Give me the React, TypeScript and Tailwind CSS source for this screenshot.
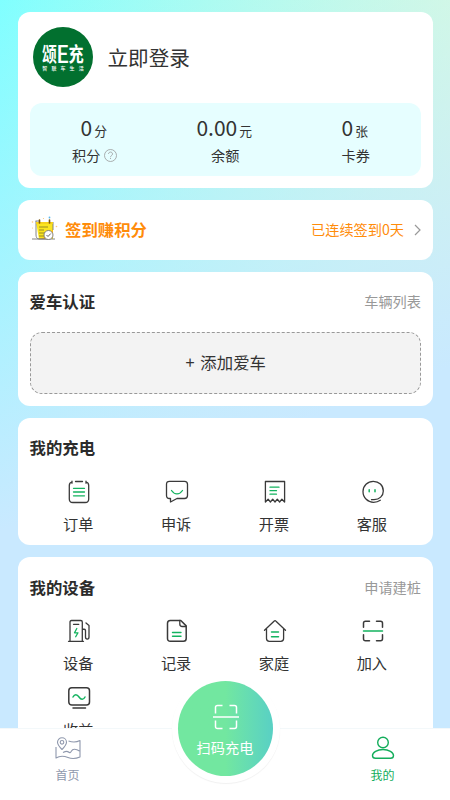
import React from 'react';

const Logo: React.FC = () => (
  <svg width="60" height="60" viewBox="0 0 60 60" className="shrink-0">
    <circle cx="30" cy="30" r="30" fill="#02702f" />
    <g fill="#fff" fontFamily="'Noto Sans CJK SC', sans-serif" fontWeight="700">
      <text transform="translate(9 34.5) scale(.72 1)" fontSize="20.500">颂</text>
      <text transform="translate(23.200 35.500) scale(.9 1)" fontSize="24" fontWeight="500">E</text>
      <text transform="translate(35.500 34.500) scale(.74 1)" fontSize="20.500">充</text>
      <text x="9.300" y="42.500" fontSize="5" letterSpacing="4.100" fontWeight="500">智联车生活</text>
    </g>
  </svg>
);

const CalendarIcon: React.FC = () => (
  <svg width="28" height="28" viewBox="0 0 28 28" fill="none">
    <path d="M5 6h17v17H8z" fill="#fbe51f" />
    <path d="M22 13v8l-5 2h-8l9-4z" fill="#fdb515" />
    <path d="M5 5v14c0 2 1 4 3 4h9M4.500 5h4M22 6v8M1 23h23" stroke="#777" strokeWidth=".9" />
    <path d="M5 6h17v2H5z" fill="#f6d21c" />
    <path d="M8.500 4v3M18.500 4v3" stroke="#7a5310" strokeWidth="1.600" strokeLinecap="round" />
    <path d="M8 11h9M8 14h5M8 17h7M8 20h5" stroke="#8d8224" strokeWidth=".9" />
    <circle cx="17.500" cy="19" r="4.500" fill="#fff" stroke="#777" strokeWidth=".9" />
    <path d="M15.500 19l1.500 1.500 2.800-3" stroke="#555" strokeWidth=".9" />
    <circle cx="18.500" cy="1.500" r=".9" fill="#5bb8ef" />
    <circle cx="1.500" cy="6" r=".8" fill="#fbc97c" />
    <circle cx="12.500" cy="2.500" r=".6" fill="#fbc97c" />
    <circle cx="25.500" cy="10.500" r=".8" fill="#fbc97c" />
    <circle cx="1.500" cy="12" r=".6" fill="#fbc97c" />
  </svg>
);

const DARK = '#3a3a3a';
const GREEN = '#13b35f';

const Icon: React.FC<{ children: React.ReactNode }> = ({ children }) => (
  <svg width="24" height="24" viewBox="0 0 24 24" fill="none" stroke={DARK} strokeWidth="1.3" strokeLinecap="round" strokeLinejoin="round">
    {children}
  </svg>
);

const OrderIcon = () => (
  <Icon>
    <path d="M5 2.200C3.200 2.500 2.300 3.700 2.300 5.500V19c0 2.200 1.300 3.500 3.500 3.500h12.400c2.200 0 3.500-1.300 3.500-3.500V5.500c0-1.800-.9-3-2.700-3.300M8.500 1.500h7M5 1.200v2M19 1.200v2" />
    <path d="M6.500 8.300h11M6.500 12h11M6.500 15.800h11" stroke={GREEN} />
  </Icon>
);

const AppealIcon = () => (
  <Icon>
    <path d="M4.500 1.300h15c2 0 3 1 3 3V15.500c0 2-1 3-3 3h-7.500L5.500 22v-3.500h-1c-2 0-3-1-3-3V4.300c0-2 1-3 3-3z" />
    <path d="M6.500 10.500c3 4.500 8 4.500 11 0" stroke={GREEN} />
  </Icon>
);

const InvoiceIcon = () => (
  <Icon>
    <path d="M2.400 22V1.500h19.200V22l-2.700-2.800-2.300 2.800-2.300-2.800L12 22l-2.300-2.800L7.400 22l-2.300-2.800z" />
    <path d="M7 7.200h9M7 10.700h6.500M7 14.200h6.500" stroke={GREEN} />
  </Icon>
);

const ServiceIcon = () => (
  <Icon>
    <path d="M10.500 19.700h2.500c5.500-.3 9.300-3.700 9.300-8.700C22.300 5.500 18 1.300 12.300 1.300S2 5.600 2 11.500c0 6.500 5 10.800 10.500 10.800 3 0 5-.7 6.800-2" />
    <path d="M8.200 9.700v2M14 9.700v2" stroke={GREEN} strokeWidth="1.500" />
  </Icon>
);

const DeviceIcon = () => (
  <Icon>
    <path d="M1.500 22.300h15M3 22V3c0-1 .5-1.500 1.500-1.500h9.300c1 0 1.500.5 1.500 1.500v19M6.500 5.300h5.300M19 4l3 2.500V18c0 2.700-3.500 2.700-3.500 0V11.500c0-1-.8-1.500-3-1.500" />
    <path d="M9.800 9.500l-2.300 4.300h3.500l-2.300 4" stroke={GREEN} />
  </Icon>
);

const RecordIcon = () => (
  <Icon>
    <path d="M5.300 1.500h10.500l5.400 5.400V19.500c0 1.800-1 2.800-2.800 2.800H5.300c-1.800 0-2.800-1-2.800-2.800V4.300c0-1.800 1-2.800 2.800-2.800z" strokeWidth="1.500" />
    <path d="M14.800 1.500v3.500c0 1.700.8 2.500 2.500 2.500h3.500" />
    <path d="M7.500 13.500h8.500M7.500 17.200h8.500" stroke={GREEN} strokeWidth="1.400" />
  </Icon>
);

const HomeIcon = () => (
  <Icon>
    <path d="M1.500 11.300L11 2.200c.7-.7 1.400-.7 2 0l9.500 9.100M3.500 10v9.500c0 1.800 1 2.800 2.800 2.800h11.500c1.800 0 2.800-1 2.800-2.800V10" />
    <path d="M8.500 13h7M8.500 17.800h7" stroke={GREEN} strokeWidth="1.500" />
  </Icon>
);

const JoinIcon = () => (
  <Icon>
    <path d="M8.500 2.300h-4c-1.300 0-2 .7-2 2v4M15.500 2.300h4c1.300 0 2 .7 2 2v4M8.500 21.700h-4c-1.300 0-2-.7-2-2v-4M15.500 21.700h4c1.300 0 2-.7 2-2v-4" strokeWidth="1.500" />
    <path d="M2.500 12h19" stroke={GREEN} strokeWidth="1.500" />
  </Icon>
);

const IncomeIcon = () => (
  <Icon>
    <rect x="1.800" y="1.700" width="20.700" height="17.300" rx="3" strokeWidth="1.500" />
    <path d="M6 22h12.500" strokeWidth="1.500" />
    <path d="M6 11c1.500-3 4-3 6 0s4.500 3 6 0" stroke={GREEN} strokeWidth="1.500" />
  </Icon>
);

const STATS = [
  { value: '0', unit: '分', label: '积分', help: true },
  { value: '0.00', unit: '元', label: '余额' },
  { value: '0', unit: '张', label: '卡券' },
];

const CHARGING = [
  { label: '订单', icon: OrderIcon },
  { label: '申诉', icon: AppealIcon },
  { label: '开票', icon: InvoiceIcon },
  { label: '客服', icon: ServiceIcon },
];

const DEVICES = [
  { label: '设备', icon: DeviceIcon },
  { label: '记录', icon: RecordIcon },
  { label: '家庭', icon: HomeIcon },
  { label: '加入', icon: JoinIcon },
  { label: '收益', icon: IncomeIcon },
];

const MenuGrid: React.FC<{ items: typeof CHARGING }> = ({ items }) => (
  <div className="-mr-[0.5px] ml-[0.5px] grid grid-cols-4 gap-y-[7px]">
    {items.map((item) => (
      <div key={item.label} className="flex h-[60px] flex-col items-center">
        <item.icon />
        <span className="mt-[7px] pr-[1.5px] text-[15.2px] leading-6">{item.label}</span>
      </div>
    ))}
  </div>
);

const App: React.FC = () => {
  return (
    <div className="relative h-[800px] w-[450px] overflow-hidden bg-[linear-gradient(160deg,rgba(201,233,255,0),#c9e9ff_500px),linear-gradient(to_right,#80ffff,#d4fddd)] font-['Noto_Sans_CJK_SC',sans-serif] text-[#333]">
      <div className="flex flex-col gap-3 pt-3 pr-[17px] pl-[17.5px]">
        {/* Profile */}
        <section className="h-44 rounded-xl bg-white px-3 pt-[15px]">
          <div className="flex items-center pl-[3px]">
            <Logo />
            <span className="ml-[15px] text-[20.6px] leading-8">立即登录</span>
          </div>
          <div className="mt-4 grid h-[73px] grid-cols-3 rounded-xl bg-[#e6feff] pt-[10px] text-center">
            {STATS.map((stat) => (
              <div key={stat.label} className="flex flex-col items-center">
                <div className="flex h-7 items-baseline gap-[2px] pr-[2px] leading-7">
                  <span className="text-[21px] leading-7">{stat.value}</span>
                  <span className="text-[12.8px]">{stat.unit}</span>
                </div>
                <div className="flex items-center gap-1 text-[14.2px] leading-7">
                  <span>{stat.label}</span>
                  {stat.help && (
                    <svg width="13" height="13" viewBox="0 0 13 13" fill="none" stroke="#999" strokeWidth=".8">
                      <circle cx="6.500" cy="6.500" r="6" />
                      <path d="M4.500 5c.1-2.600 4-2.600 4 0 0 1.500-2 1.500-2 3.200M6.500 9v1" />
                    </svg>
                  )}
                </div>
              </div>
            ))}
          </div>
        </section>

        {/* Daily check-in */}
        <section className="flex h-[60px] items-center rounded-xl bg-white px-3 text-[#ff8c0a]">
          <div className="pl-[1.5px]">
            <CalendarIcon />
          </div>
          <span className="ml-[6px] pb-px text-[16.4px] font-bold">签到赚积分</span>
          <span className="ml-auto text-[14.2px]">已连续签到0天</span>
          <svg width="7" height="12" viewBox="0 0 7 12" fill="none" stroke="#999" strokeWidth="1.200" className="ml-[10px]">
            <path d="M1 1l5 5-5 5" />
          </svg>
        </section>

        {/* Vehicle */}
        <section className="h-[134px] rounded-xl bg-white px-3">
          <div className="flex h-[60px] items-center justify-between">
            <h2 className="pb-[2px] text-[16.4px] font-bold text-[#2b2b2b]">爱车认证</h2>
            <span className="text-[14.2px] text-[#999]">车辆列表</span>
          </div>
          <div className="flex h-[62px] items-center justify-center rounded-xl border border-dashed border-[#999] bg-[#f3f3f3] pb-px pl-px text-[16.4px] [word-spacing:2px]">
            + 添加爱车
          </div>
        </section>

        <section className="h-[127px] rounded-xl bg-white px-3">
          <div className="flex h-[62px] items-center">
            <h2 className="pb-[3px] text-[16.4px] font-bold text-[#2b2b2b]">我的充电</h2>
          </div>
          <MenuGrid items={CHARGING} />
        </section>

        <section className="h-[260px] rounded-xl bg-white px-3">
          <div className="flex h-[62px] items-center justify-between">
            <h2 className="pb-[2px] text-[16.4px] font-bold text-[#2b2b2b]">我的设备</h2>
            <span className="text-[14.2px] text-[#999]">申请建桩</span>
          </div>
          <MenuGrid items={DEVICES} />
        </section>
      </div>

      {/* Tab bar */}
      <nav className="absolute inset-x-0 bottom-0 h-[72px] border-t border-[#f3f8fa] bg-white">
        <div className="absolute top-[-54px] left-[172px] size-[108px] rounded-full bg-white shadow-[0_1px_1px_rgba(0,0,0,0.06)]" />
        <div className="relative grid h-full grid-cols-[135px_1fr_135px] text-xs">
          <div className="flex flex-col items-center pt-[7px] text-[#8f98ad]">
            <svg width="26" height="24" viewBox="0 0 26 24" fill="none" stroke="currentColor" strokeWidth="1.100" strokeLinejoin="round">
              <path d="M7 13.500c-3-3-4.500-5-4.500-7.200a4.500 4.500 0 0 1 9 0c0 2.200-1.500 4.200-4.500 7.200z" />
              <circle cx="7" cy="6.300" r="1.800" />
              <path d="M1 11v11c4-2.500 7-2.500 12-.5 5 2 8 1.200 12-.5V4.500c-4 2-7 2-11.500.5M8 16.500c3-1.500 4.500-1.500 5.500-.5s2 1 3-1 4-2.500 8 0" />
            </svg>
            <span className="mt-[6px] leading-[18px]">首页</span>
          </div>
          <div />
          <div className="flex flex-col items-center pt-[7px] text-[#13ad5b]">
            <svg width="24" height="24" viewBox="0 0 24 24" fill="none" stroke="currentColor" strokeWidth="1.400">
              <circle cx="12" cy="6.500" r="5.300" />
              <path d="M12 13.500c5.800 0 10.500 3 10.500 6 0 2-1 2.800-3 2.800h-15c-2 0-3-.8-3-2.800 0-3 4.700-6 10.500-6z" />
            </svg>
            <span className="mt-[6px] leading-[18px]">我的</span>
          </div>
        </div>
        <div className="absolute top-[-48px] left-[178px] flex size-[95px] flex-col items-center rounded-full bg-linear-to-r from-[#72e7a0] from-50% to-[#59d0c4] pt-[23px] text-white">
          <svg width="26" height="26" viewBox="0 0 26 26" fill="none" stroke="currentColor" strokeWidth="1.500">
            <path d="M9.500 1.500H4.500c-1.300 0-2 .7-2 2v6M16.500 1.500h5c1.300 0 2 .7 2 2v6M9.500 24.500H4.500c-1.300 0-2-.7-2-2v-6M16.500 24.500h5c1.300 0 2-.7 2-2v-6M0 13h26" />
          </svg>
          <span className="mt-[5px] pr-px text-[14.2px] leading-6">扫码充电</span>
        </div>
      </nav>
    </div>
  );
};

export default App;
